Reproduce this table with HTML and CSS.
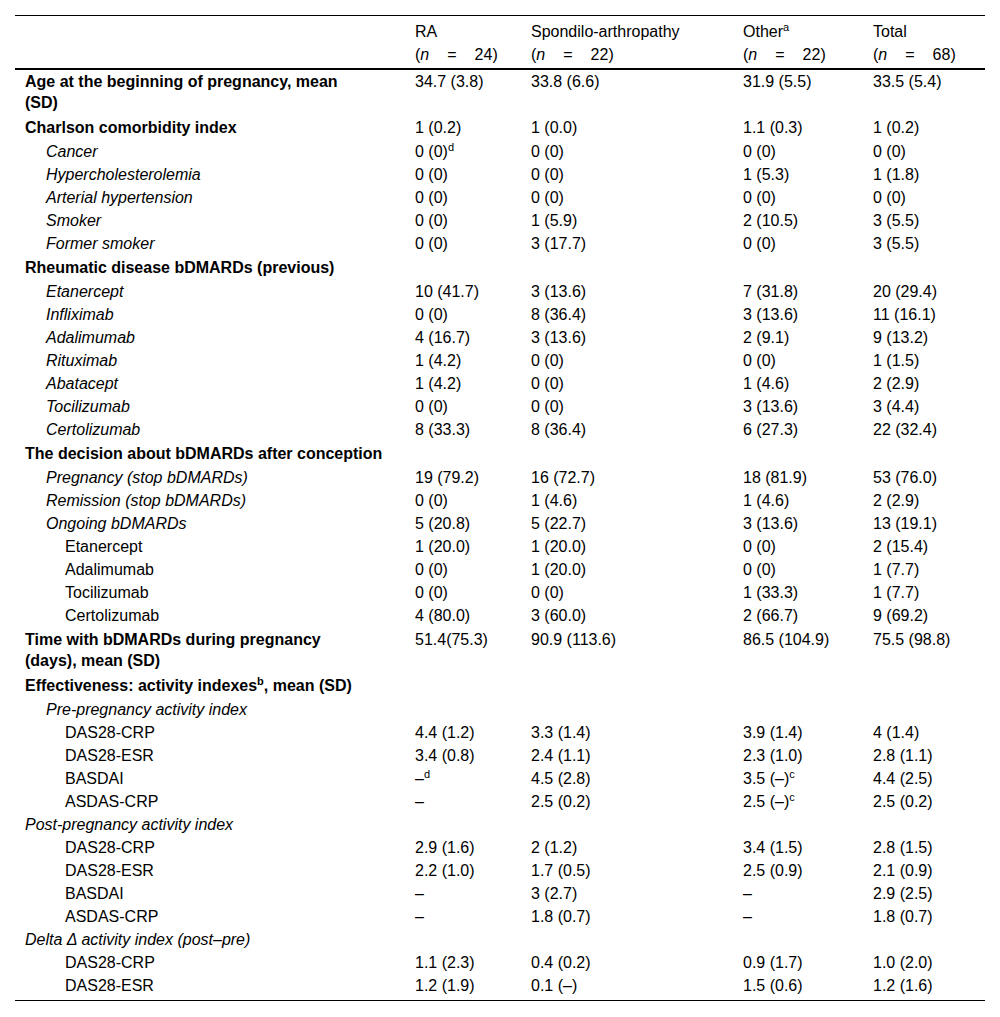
FILE: index.html
```html
<!DOCTYPE html>
<html>
<head>
<meta charset="utf-8">
<link rel="stylesheet" href="styles.css">
</head>
<body>
<table class="tbl">
<colgroup>
<col class="c0"><col class="c1"><col class="c2"><col class="c3"><col class="c4">
</colgroup>
<thead>
<tr>
<th></th>
<th>RA<br>(<i>n</i><span class="eq">=</span>24)</th>
<th>Spondilo-arthropathy<br>(<i>n</i><span class="eq">=</span>22)</th>
<th>Other<sup>a</sup><br>(<i>n</i><span class="eq">=</span>22)</th>
<th>Total<br>(<i>n</i><span class="eq">=</span>68)</th>
</tr>
</thead>
<tbody>
<tr class="b"><td>Age at the beginning of pregnancy, mean (SD)</td><td>34.7 (3.8)</td><td>33.8 (6.6)</td><td>31.9 (5.5)</td><td>33.5 (5.4)</td></tr>
<tr class="b"><td>Charlson comorbidity index</td><td>1 (0.2)</td><td>1 (0.0)</td><td>1.1 (0.3)</td><td>1 (0.2)</td></tr>
<tr><td class="l1">Cancer</td><td>0 (0)<sup>d</sup></td><td>0 (0)</td><td>0 (0)</td><td>0 (0)</td></tr>
<tr><td class="l1">Hypercholesterolemia</td><td>0 (0)</td><td>0 (0)</td><td>1 (5.3)</td><td>1 (1.8)</td></tr>
<tr><td class="l1">Arterial hypertension</td><td>0 (0)</td><td>0 (0)</td><td>0 (0)</td><td>0 (0)</td></tr>
<tr><td class="l1">Smoker</td><td>0 (0)</td><td>1 (5.9)</td><td>2 (10.5)</td><td>3 (5.5)</td></tr>
<tr><td class="l1">Former smoker</td><td>0 (0)</td><td>3 (17.7)</td><td>0 (0)</td><td>3 (5.5)</td></tr>
<tr class="b"><td colspan="5">Rheumatic disease bDMARDs (previous)</td></tr>
<tr><td class="l1">Etanercept</td><td>10 (41.7)</td><td>3 (13.6)</td><td>7 (31.8)</td><td>20 (29.4)</td></tr>
<tr><td class="l1">Infliximab</td><td>0 (0)</td><td>8 (36.4)</td><td>3 (13.6)</td><td>11 (16.1)</td></tr>
<tr><td class="l1">Adalimumab</td><td>4 (16.7)</td><td>3 (13.6)</td><td>2 (9.1)</td><td>9 (13.2)</td></tr>
<tr><td class="l1">Rituximab</td><td>1 (4.2)</td><td>0 (0)</td><td>0 (0)</td><td>1 (1.5)</td></tr>
<tr><td class="l1">Abatacept</td><td>1 (4.2)</td><td>0 (0)</td><td>1 (4.6)</td><td>2 (2.9)</td></tr>
<tr><td class="l1">Tocilizumab</td><td>0 (0)</td><td>0 (0)</td><td>3 (13.6)</td><td>3 (4.4)</td></tr>
<tr><td class="l1">Certolizumab</td><td>8 (33.3)</td><td>8 (36.4)</td><td>6 (27.3)</td><td>22 (32.4)</td></tr>
<tr class="b"><td colspan="5">The decision about bDMARDs after conception</td></tr>
<tr><td class="l1">Pregnancy (stop bDMARDs)</td><td>19 (79.2)</td><td>16 (72.7)</td><td>18 (81.9)</td><td>53 (76.0)</td></tr>
<tr><td class="l1">Remission (stop bDMARDs)</td><td>0 (0)</td><td>1 (4.6)</td><td>1 (4.6)</td><td>2 (2.9)</td></tr>
<tr><td class="l1">Ongoing bDMARDs</td><td>5 (20.8)</td><td>5 (22.7)</td><td>3 (13.6)</td><td>13 (19.1)</td></tr>
<tr><td class="l2">Etanercept</td><td>1 (20.0)</td><td>1 (20.0)</td><td>0 (0)</td><td>2 (15.4)</td></tr>
<tr><td class="l2">Adalimumab</td><td>0 (0)</td><td>1 (20.0)</td><td>0 (0)</td><td>1 (7.7)</td></tr>
<tr><td class="l2">Tocilizumab</td><td>0 (0)</td><td>0 (0)</td><td>1 (33.3)</td><td>1 (7.7)</td></tr>
<tr><td class="l2">Certolizumab</td><td>4 (80.0)</td><td>3 (60.0)</td><td>2 (66.7)</td><td>9 (69.2)</td></tr>
<tr class="b"><td>Time with bDMARDs during pregnancy (days), mean (SD)</td><td>51.4(75.3)</td><td>90.9 (113.6)</td><td>86.5 (104.9)</td><td>75.5 (98.8)</td></tr>
<tr class="b"><td colspan="5">Effectiveness: activity indexes<sup>b</sup>, mean (SD)</td></tr>
<tr><td class="l1 i" colspan="5">Pre-pregnancy activity index</td></tr>
<tr><td class="l2">DAS28-CRP</td><td>4.4 (1.2)</td><td>3.3 (1.4)</td><td>3.9 (1.4)</td><td>4 (1.4)</td></tr>
<tr><td class="l2">DAS28-ESR</td><td>3.4 (0.8)</td><td>2.4 (1.1)</td><td>2.3 (1.0)</td><td>2.8 (1.1)</td></tr>
<tr><td class="l2">BASDAI</td><td>–<sup>d</sup></td><td>4.5 (2.8)</td><td>3.5 (–)<sup>c</sup></td><td>4.4 (2.5)</td></tr>
<tr><td class="l2">ASDAS-CRP</td><td>–</td><td>2.5 (0.2)</td><td>2.5 (–)<sup>c</sup></td><td>2.5 (0.2)</td></tr>
<tr><td class="i" colspan="5">Post-pregnancy activity index</td></tr>
<tr><td class="l2">DAS28-CRP</td><td>2.9 (1.6)</td><td>2 (1.2)</td><td>3.4 (1.5)</td><td>2.8 (1.5)</td></tr>
<tr><td class="l2">DAS28-ESR</td><td>2.2 (1.0)</td><td>1.7 (0.5)</td><td>2.5 (0.9)</td><td>2.1 (0.9)</td></tr>
<tr><td class="l2">BASDAI</td><td>–</td><td>3 (2.7)</td><td>–</td><td>2.9 (2.5)</td></tr>
<tr><td class="l2">ASDAS-CRP</td><td>–</td><td>1.8 (0.7)</td><td>–</td><td>1.8 (0.7)</td></tr>
<tr><td class="i" colspan="5">Delta Δ activity index (post–pre)</td></tr>
<tr><td class="l2">DAS28-CRP</td><td>1.1 (2.3)</td><td>0.4 (0.2)</td><td>0.9 (1.7)</td><td>1.0 (2.0)</td></tr>
<tr class="last"><td class="l2">DAS28-ESR</td><td>1.2 (1.9)</td><td>0.1 (–)</td><td>1.5 (0.6)</td><td>1.2 (1.6)</td></tr>
</tbody>
</table>
</body>
</html>
```
FILE: styles.css
```css
html, body {
  margin: 0;
  padding: 0;
  background: #fff;
}
body {
  padding: 15px 15px 0 15px;
  font-family: "Liberation Sans", Arial, sans-serif;
  font-size: 16px;
  color: #000;
}
.tbl {
  width: 970px;
  border-collapse: collapse;
  table-layout: fixed;
  border-top: 1px solid #000;
  border-bottom: 1px solid #000;
}
.c0 { width: 390px; }
.c1 { width: 116px; }
.c2 { width: 212px; }
.c3 { width: 130px; }
.c4 { width: 122px; }
.tbl th {
  font-weight: normal;
  text-align: left;
  vertical-align: top;
  line-height: 23px;
  padding: 4px 10px 2px 10px;
  border-bottom: 2px solid #000;
}
.tbl td {
  text-align: left;
  vertical-align: top;
  line-height: 21px;
  padding: 0 10px 2px 10px;
}
.tbl tr.b td {
  padding-top: 1px;
  padding-bottom: 3px;
}
.tbl tr.last td {
  padding-bottom: 4px;
}
.tbl tr.b td:first-child {
  font-weight: bold;
  padding-right: 50px;
}
.tbl tr.b td[colspan] {
  padding-right: 10px;
}
.tbl td.l1 {
  padding-left: 31px;
  font-style: italic;
}
.tbl td.l2 {
  padding-left: 50px;
}
.tbl td.i {
  font-style: italic;
}
.eq {
  display: inline-block;
  padding: 0 18px 0 18px;
}
sup {
  font-size: 11px;
  line-height: 0;
  vertical-align: 6px;
}
```
